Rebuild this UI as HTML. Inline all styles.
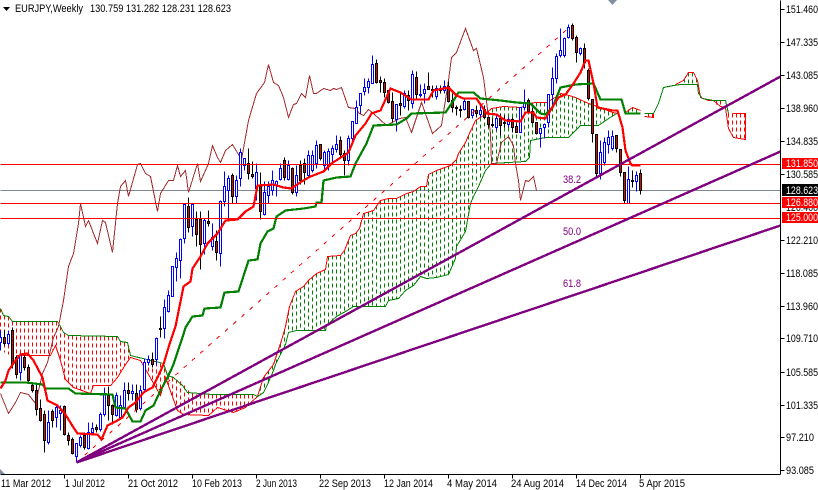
<!DOCTYPE html>
<html><head><meta charset="utf-8"><style>
html,body{margin:0;padding:0;background:#fff;width:818px;height:490px;overflow:hidden}
svg{display:block}
text{font-family:"Liberation Sans",sans-serif;font-size:11px;fill:#000}
.l{shape-rendering:crispEdges;fill:none}
</style></head><body>
<svg width="818" height="490" viewBox="0 0 818 490" xmlns="http://www.w3.org/2000/svg">
<rect width="818" height="490" fill="#fff"/>
<g transform="translate(.5 .5)" shape-rendering="crispEdges" fill="none">
<path stroke="#808890" d="M0 190H780"/>
<!-- red hatch -->
<path stroke="#f00" stroke-dasharray="4 3" d="M0 308V350M4 315V352M8 316V354M12 321V355M16 321V355M20 321V355M24 321V355M28 321V355M32 321V355M36 321V355M40 321V355M44 321V355M48 321V355M52 321V350M56 321V345M60 326V360M64 333V381M68 335V384M72 335V387M76 336V388M80 336V390M84 336V392M88 336V393M92 336V388M96 336V385M100 336V385M104 336V385M108 336V385M112 336V381M116 336V378M120 341V371M124 342V365M128 348V360M144 359V367M148 360V374M152 361V381M156 362V388M160 363V395M164 368V380M168 375V385M172 377V397M176 379V409M180 381V412M184 385V414M188 390V415M192 393V415M196 394V415M200 394V415M204 394V415M208 394V415M212 394V411M216 394V407M220 394V408M224 394V410M228 394V411M232 394V412M236 394V411M240 394V409M244 394V407M248 394V403M252 394V400M648 113V117M652 113V117M716 100V106M720 100V106M728 113V128M732 113V136M736 113V138M740 113V139M744 113V139"/>
<!-- green hatch -->
<path stroke="#008000" stroke-dasharray="4 3" d="M260 386V394M264 376V390M268 370V382M272 365V371M276 352V362M280 343V354M284 330V345M288 311V332M292 298V331M296 290V330M300 288V330M304 285V330M308 280V330M312 276V330M316 273V330M320 271V330M324 269V330M328 256V323M332 255V319M336 255V316M340 255V313M344 250V311M348 240V309M352 234V307M356 232V306M360 222V306M364 213V306M368 212V306M372 210V306M376 205V306M380 200V306M384 199V306M388 198V300M392 198V299M396 198V298M400 196V294M404 194V291M408 192V288M412 191V285M416 189V281M420 186V276M424 186V277M428 174V278M432 172V277M436 170V277M440 169V276M444 167V275M448 165V274M452 162V265M456 159V246M460 150V240M464 143V233M468 135V215M472 126V197M476 120V184M480 117V177M484 115V171M488 111V165M492 108V163M496 107V163M500 106V163M504 106V163M508 106V163M512 106V162M516 106V162M520 107V162M524 104V161M528 103V158M532 102V138M536 102V138M540 102V137M544 102V137M548 108V137M552 100V137M556 95V137M560 93V137M564 94V137M568 95V137M572 96V133M576 98V128M580 99V125M584 101V125M588 103V125M592 104V125M596 106V125M600 107V122M604 109V120M608 111V118M612 112V116M628 109V113M632 107V113M636 109V113M684 78V84M688 72V84M692 72V84M696 78V84"/>
<!-- Senkou A -->
<path stroke="#f00" d="M16 355L50 355L55 345L60 360L65 379L73 387L90 393L93 385L110 385L117 377L125 364L130 357L140 360L148 374L160 395L165 377L177 410L183 414L208 415L217 407L233 412L245 407L257 396L263 377L273 364L281 340L285 326L289 306L295 291L303 286L308 280L316 273L325 269L327 256L340 255L344 250L350 235L355 233L359 228L363 213L370 211L373 210L380 200L388 198L396 198L406 193L413 191L420 186L426 186L428 174L436 170L450 165L456 159L458 153L465 142L468 135L475 120L483 115L491 108L503 106L521 107L526 103L536 102L546 102L553 98L560 93L565 94L575 97L588 103L600 107L612 112L617 113M625 112L632 107L640 110M644 116L653 117L653 113M675 84L683 80L688 72L693 72L697 80L700 97L708 100L713 100L720 106L725 107L728 128L733 137L745 139V113H732"/>
<!-- Senkou B -->
<path stroke="#008000" d="M0 308L3 315L8 316L12 321L57 321L60 326L63 332L68 335L117 336L120 341L127 342L130 355L163 363L167 375L173 377L182 385L187 392L212 394L253 394L257 396L263 392L267 384L273 370L275 364L280 354L285 344L288 332L296 330L325 330L326 325L336 316L345 311L353 306L385 306L388 300L398 298L405 290L413 285L420 276L426 278L436 277L448 274L455 258L456 246L465 231L470 203L473 196L478 186L485 170L491 163L525 161L529 157L530 140L545 137L568 137L573 132L580 125L598 125L608 118L618 112M644 113L653 113L658 103L663 87L673 85L680 84L697 84L698 93L702 98L713 100L725 100L728 113"/>
<!-- Chikou -->
<path stroke="#a52a2a" d="M0 393L8 413L15 402L20 392L28 394L35 403L42 373L47 362L53 337L58 326L63 300L68 266L73 253L78 223L80 203L85 226L88 220L97 243L102 220L105 222L112 252L117 203L120 186L125 180L128 196L137 164L140 163L145 173L150 176L157 211L160 193L168 180L173 180L177 165L180 176L185 170L188 192L197 163L200 181L208 163L212 145L217 157L220 162L225 150L232 144L241 159L248 120L256 93L264 82L268 64L273 82L278 85L283 97L288 117L293 104L296 103L301 93L305 97L309 75L313 93L316 93L323 88L330 90L333 88L336 89L341 87L348 107L355 108L359 113L363 115L368 109L373 113L386 125L399 118L405 117L411 132L421 102L432 133L441 125L448 80L451 57L456 52L465 28L473 50L476 48L483 77L490 133L491 163L496 163L501 142L508 136L513 145L515 163L518 180L520 200L525 180L528 181L533 176L536 190"/>
<!-- blue candles -->
<path stroke="#00f" d="M0 330V350M8 330V345M20 353V380M48 410V444M56 404V427M60 405V430M76 443V462M80 435V447M88 422V449M92 422V434M100 412V431M104 387V416M116 392V416M120 395V418M124 382V407M132 384V400M140 385V410M144 358V390M148 355V365M156 337V365M164 299V338M168 290V312M172 266V296M176 252V281M180 238V278M184 204V243M192 204V236M204 218V254M212 223V250M220 200V266M224 171V206M228 175V218M236 175V203M240 148V186M244 158V170M256 163V200M264 181V215M268 181V203M272 170V195M276 180V196M280 163V180M288 160V180M296 165V196M308 150V178M312 150V172M316 140V168M324 150V170M328 148V170M332 145V163M336 135V152M348 135V165M352 121V142M356 100V123M360 93V113M364 78V95M368 78V93M372 55V83M396 104V131M404 90V108M412 70V108M420 84V97M424 83V103M436 85V99M444 80V93M464 98V110M472 109V118M480 103V117M496 115V130M508 117V127M520 107V132M524 89V110M540 128V147M544 123V138M548 94V127M552 67V107M556 53V83M560 28V57M564 37V57M568 24V38M580 47V55M600 140V179M604 137V165M608 130V153M612 130V150M628 166V203M636 171V191"/>
<path stroke="#00f" fill="#fff" d="M-1 337h2V342h-2zM7 334h2V343h-2zM19 355h2V372h-2zM47 422h2V442h-2zM55 407h2V417h-2zM59 410h2V413h-2zM75 443h2V456h-2zM79 437h2V445h-2zM87 432h2V448h-2zM91 428h2V432h-2zM99 414h2V429h-2zM103 394h2V414h-2zM115 395h2V415h-2zM119 405h2V417h-2zM123 390h2V407h-2zM131 391h2V393h-2zM139 390h2V408h-2zM143 362h2V389h-2zM147 359h2V362h-2zM155 338h2V359h-2zM163 307h2V328h-2zM167 295h2V311h-2zM171 266h2V296h-2zM175 258h2V267h-2zM179 239h2V260h-2zM183 204h2V238h-2zM191 204h2V226h-2zM203 220h2V243h-2zM211 237h2V246h-2zM219 201h2V253h-2zM223 186h2V201h-2zM227 178h2V190h-2zM235 180h2V196h-2zM239 152h2V178h-2zM243 158h2V165h-2zM255 172h2V188h-2zM263 192h2V214h-2zM267 186h2V195h-2zM271 180h2V190h-2zM275 181h2V185h-2zM279 168h2V179h-2zM287 165h2V179h-2zM295 175h2V192h-2zM307 155h2V175h-2zM311 155h2V170h-2zM315 145h2V163h-2zM323 152h2V165h-2zM327 151h2V165h-2zM331 148h2V154h-2zM335 144h2V149h-2zM347 138h2V160h-2zM351 121h2V138h-2zM355 107h2V123h-2zM359 93h2V105h-2zM363 87h2V91h-2zM367 81h2V87h-2zM371 64h2V83h-2zM395 104h2V119h-2zM403 93h2V106h-2zM411 74h2V103h-2zM419 94h2V95h-2zM423 89h2V93h-2zM435 88h2V96h-2zM443 86h2V90h-2zM463 101h2V109h-2zM471 109h2V115h-2zM479 110h2V114h-2zM495 118h2V127h-2zM507 119h2V124h-2zM519 107h2V132h-2zM523 102h2V107h-2zM539 128h2V133h-2zM543 124h2V127h-2zM547 94h2V122h-2zM551 78h2V94h-2zM555 56h2V78h-2zM559 50h2V55h-2zM563 38h2V55h-2zM567 27h2V37h-2zM579 48h2V53h-2zM599 152h2V173h-2zM603 142h2V162h-2zM607 137h2V144h-2zM611 136h2V148h-2zM627 179h2V203h-2zM635 175h2V181h-2z"/>
<!-- bear candles -->
<path stroke="#000" d="M4 330V345M12 327V368M16 355V378M24 355V370M28 364V382M32 382V392M36 382V415M40 399V421M44 410V452M52 409V427M64 405V435M68 432V445M72 437V454M84 432V449M96 424V432M108 386V420M112 404V424M128 382V400M136 384V412M152 352V367M160 316V337M188 197V232M196 211V246M200 211V269M208 210V226M216 230V260M232 173V203M248 148V179M252 161V178M260 172V219M284 157V180M292 167V194M300 160V184M304 158V184M320 144V160M340 136V158M344 150V175M376 59V83M380 76V92M384 78V97M388 90V103M392 92V122M400 93V115M408 90V110M416 71V100M428 72V89M432 85V97M440 85V93M448 81V102M452 93V112M456 105V115M460 105V117M468 101V118M476 105V117M484 105V118M488 117V127M492 118V127M500 113V135M504 115V127M512 117V132M516 123V132M528 98V113M532 107V123M536 122V134M572 23V40M576 35V62M584 43V68M588 68V100M592 99V142M596 134V178M616 135V152M620 149V176M624 172V203M632 170V187M640 169V194"/>
<path stroke="#000" fill="#d01000" d="M3 337h2V343h-2zM11 330h2V364h-2zM15 357h2V374h-2zM23 357h2V367h-2zM27 367h2V380h-2zM31 385h2V390h-2zM35 390h2V409h-2zM39 408h2V420h-2zM43 414h2V440h-2zM51 411h2V420h-2zM63 406h2V434h-2zM67 435h2V440h-2zM71 439h2V453h-2zM83 435h2V447h-2zM95 427h2V429h-2zM107 395h2V405h-2zM111 405h2V414h-2zM127 390h2V393h-2zM135 393h2V409h-2zM151 359h2V364h-2zM159 328h2V329h-2zM187 206h2V227h-2zM195 219h2V234h-2zM199 219h2V244h-2zM207 221h2V223h-2zM215 241h2V252h-2zM231 175h2V196h-2zM247 163h2V173h-2zM251 174h2V176h-2zM259 186h2V211h-2zM283 160h2V177h-2zM291 168h2V192h-2zM299 165h2V180h-2zM303 163h2V172h-2zM319 144h2V158h-2zM339 140h2V154h-2zM343 153h2V160h-2zM375 63h2V82h-2zM379 80h2V82h-2zM383 82h2V92h-2zM387 90h2V102h-2zM391 101h2V118h-2zM399 103h2V105h-2zM407 95h2V100h-2zM415 77h2V94h-2zM427 86h2V89h-2zM431 89h2V90h-2zM439 89h2V90h-2zM447 86h2V101h-2zM451 100h2V107h-2zM455 107h2V108h-2zM459 109h2V110h-2zM467 101h2V117h-2zM475 110h2V113h-2zM483 109h2V117h-2zM487 117h2V124h-2zM491 124h2V125h-2zM499 118h2V125h-2zM503 122h2V123h-2zM511 119h2V127h-2zM515 126h2V132h-2zM527 100h2V111h-2zM531 111h2V122h-2zM535 122h2V133h-2zM571 25h2V38h-2zM575 37h2V52h-2zM583 48h2V62h-2zM587 70h2V98h-2zM591 99h2V133h-2zM595 134h2V173h-2zM615 135h2V148h-2zM619 149h2V172h-2zM623 172h2V200h-2zM631 180h2V181h-2zM639 173h2V190h-2z"/>
<!-- Kijun -->
<path stroke="#008000" stroke-width="2.2" d="M0 382L25 382L42 384L45 388L68 388L75 393L112 394L115 407L125 408L132 421L140 421L145 410L153 405L160 390L167 377L173 364L182 337L185 327L192 316L202 315L204 308L220 307L224 292L238 291L248 260L257 259L260 243L267 231L273 228L276 216L285 210L303 208L315 206L316 202L321 202L323 180L336 177L350 176L355 163L366 143L373 125L396 124L406 118L411 113L445 112L453 100L458 92L473 92L480 98L500 100L516 102L530 103L540 113L545 114L552 107L560 87L575 84L593 83L600 99L621 99L625 113L640 113"/>
<!-- Tenkan -->
<path stroke="#f00" stroke-width="2.2" d="M0 388L5 380L8 370L15 360L20 354L27 353L33 360L42 377L47 400L57 405L65 414L73 427L77 433L97 434L101 439L107 425L115 421L122 417L128 407L135 402L143 392L148 389L152 387L157 377L163 364L168 347L175 326L183 286L190 281L192 268L200 256L207 243L217 233L225 220L237 219L245 211L253 206L257 185L273 184L283 187L291 188L301 181L310 176L323 171L331 163L348 152L355 135L365 123L371 113L380 110L390 88L400 92L411 99L428 99L433 90L448 87L456 95L463 98L476 98L486 113L496 114L505 120L520 121L525 112L533 112L536 117L545 118L548 113L558 97L565 94L573 83L580 72L585 60L588 60L593 83L597 107L612 110L617 110L622 127L625 150L630 163L632 165L640 165"/>
<path stroke="#f00" d="M0 164H780M0 203H780M0 218H780"/>
<path stroke="#f00" stroke-dasharray="4 7" d="M76 462L571 25"/>
<path stroke="#800080" stroke-width="2.4" d="M76 462L780 76M76 462L780 151M76 462L780 225"/>
<path stroke="#000" d="M780 0V474M0 474H780M64 474v4M128 474v4M192 474v4M256 474v4M320 474v4M384 474v4M448 474v4M512 474v4M576 474v4M640 474v4M780 9h4M780 42h4M780 75h4M780 108h4M780 141h4M780 174h4M780 240h4M780 273h4M780 306h4M780 338h4M780 372h4M780 405h4M780 437h4M780 470h4"/>
</g>
<polygon points="3,7 10,7 6.5,11" fill="#000"/>
<polygon points="608,0 617,0 612.5,5" fill="#8090a0"/>
<polygon points="0,469 5,474 0,474" fill="#8090a0"/>
<text x="15" y="12" textLength="68" lengthAdjust="spacingAndGlyphs">EURJPY,Weekly</text>
<text x="90" y="12" textLength="141" lengthAdjust="spacingAndGlyphs">130.759 131.282 128.231 128.623</text>
<text x="563" y="183" textLength="18" lengthAdjust="spacingAndGlyphs" style="fill:#800080">38.2</text>
<text x="563" y="235" textLength="18" lengthAdjust="spacingAndGlyphs" style="fill:#800080">50.0</text>
<text x="563" y="287" textLength="18" lengthAdjust="spacingAndGlyphs" style="fill:#800080">61.8</text>
<g>
<text x="786" y="13" textLength="32" lengthAdjust="spacingAndGlyphs">151.460</text>
<text x="786" y="46" textLength="32" lengthAdjust="spacingAndGlyphs">147.335</text>
<text x="786" y="79" textLength="32" lengthAdjust="spacingAndGlyphs">143.085</text>
<text x="786" y="112" textLength="32" lengthAdjust="spacingAndGlyphs">138.960</text>
<text x="786" y="145" textLength="32" lengthAdjust="spacingAndGlyphs">134.835</text>
<text x="786" y="178" textLength="32" lengthAdjust="spacingAndGlyphs">130.585</text>
<text x="786" y="211" textLength="32" lengthAdjust="spacingAndGlyphs">126.460</text>
<text x="786" y="244" textLength="32" lengthAdjust="spacingAndGlyphs">122.210</text>
<text x="786" y="277" textLength="32" lengthAdjust="spacingAndGlyphs">118.085</text>
<text x="786" y="310" textLength="32" lengthAdjust="spacingAndGlyphs">113.960</text>
<text x="786" y="342" textLength="32" lengthAdjust="spacingAndGlyphs">109.710</text>
<text x="786" y="376" textLength="32" lengthAdjust="spacingAndGlyphs">105.585</text>
<text x="786" y="409" textLength="32" lengthAdjust="spacingAndGlyphs">101.335</text>
<text x="786" y="441" textLength="28" lengthAdjust="spacingAndGlyphs">97.210</text>
<text x="786" y="474" textLength="28" lengthAdjust="spacingAndGlyphs">93.085</text>
</g>
<rect x="782" y="158" width="36" height="11" fill="#f00"/>
<rect x="782" y="184" width="36" height="12" fill="#000"/>
<rect x="782" y="197" width="36" height="11" fill="#f00"/>
<rect x="782" y="212" width="36" height="11" fill="#f00"/>
<text x="786" y="167" textLength="32" lengthAdjust="spacingAndGlyphs" style="fill:#fff">131.850</text>
<text x="786" y="194" textLength="32" lengthAdjust="spacingAndGlyphs" style="fill:#fff">128.623</text>
<text x="786" y="206" textLength="32" lengthAdjust="spacingAndGlyphs" style="fill:#fff">126.880</text>
<text x="786" y="221" textLength="32" lengthAdjust="spacingAndGlyphs" style="fill:#fff">125.000</text>
<g>
<text x="1" y="487" textLength="50" lengthAdjust="spacingAndGlyphs">11 Mar 2012</text>
<text x="65" y="487" textLength="40" lengthAdjust="spacingAndGlyphs">1 Jul 2012</text>
<text x="128" y="487" textLength="50" lengthAdjust="spacingAndGlyphs">21 Oct 2012</text>
<text x="192" y="487" textLength="50" lengthAdjust="spacingAndGlyphs">10 Feb 2013</text>
<text x="256" y="487" textLength="41" lengthAdjust="spacingAndGlyphs">2 Jun 2013</text>
<text x="319" y="487" textLength="52" lengthAdjust="spacingAndGlyphs">22 Sep 2013</text>
<text x="384" y="487" textLength="49" lengthAdjust="spacingAndGlyphs">12 Jan 2014</text>
<text x="447" y="487" textLength="50" lengthAdjust="spacingAndGlyphs">4 May 2014</text>
<text x="511" y="487" textLength="53" lengthAdjust="spacingAndGlyphs">24 Aug 2014</text>
<text x="576" y="487" textLength="51" lengthAdjust="spacingAndGlyphs">14 Dec 2014</text>
<text x="639" y="487" textLength="46" lengthAdjust="spacingAndGlyphs">5 Apr 2015</text>
</g>
</svg>
</body></html>
